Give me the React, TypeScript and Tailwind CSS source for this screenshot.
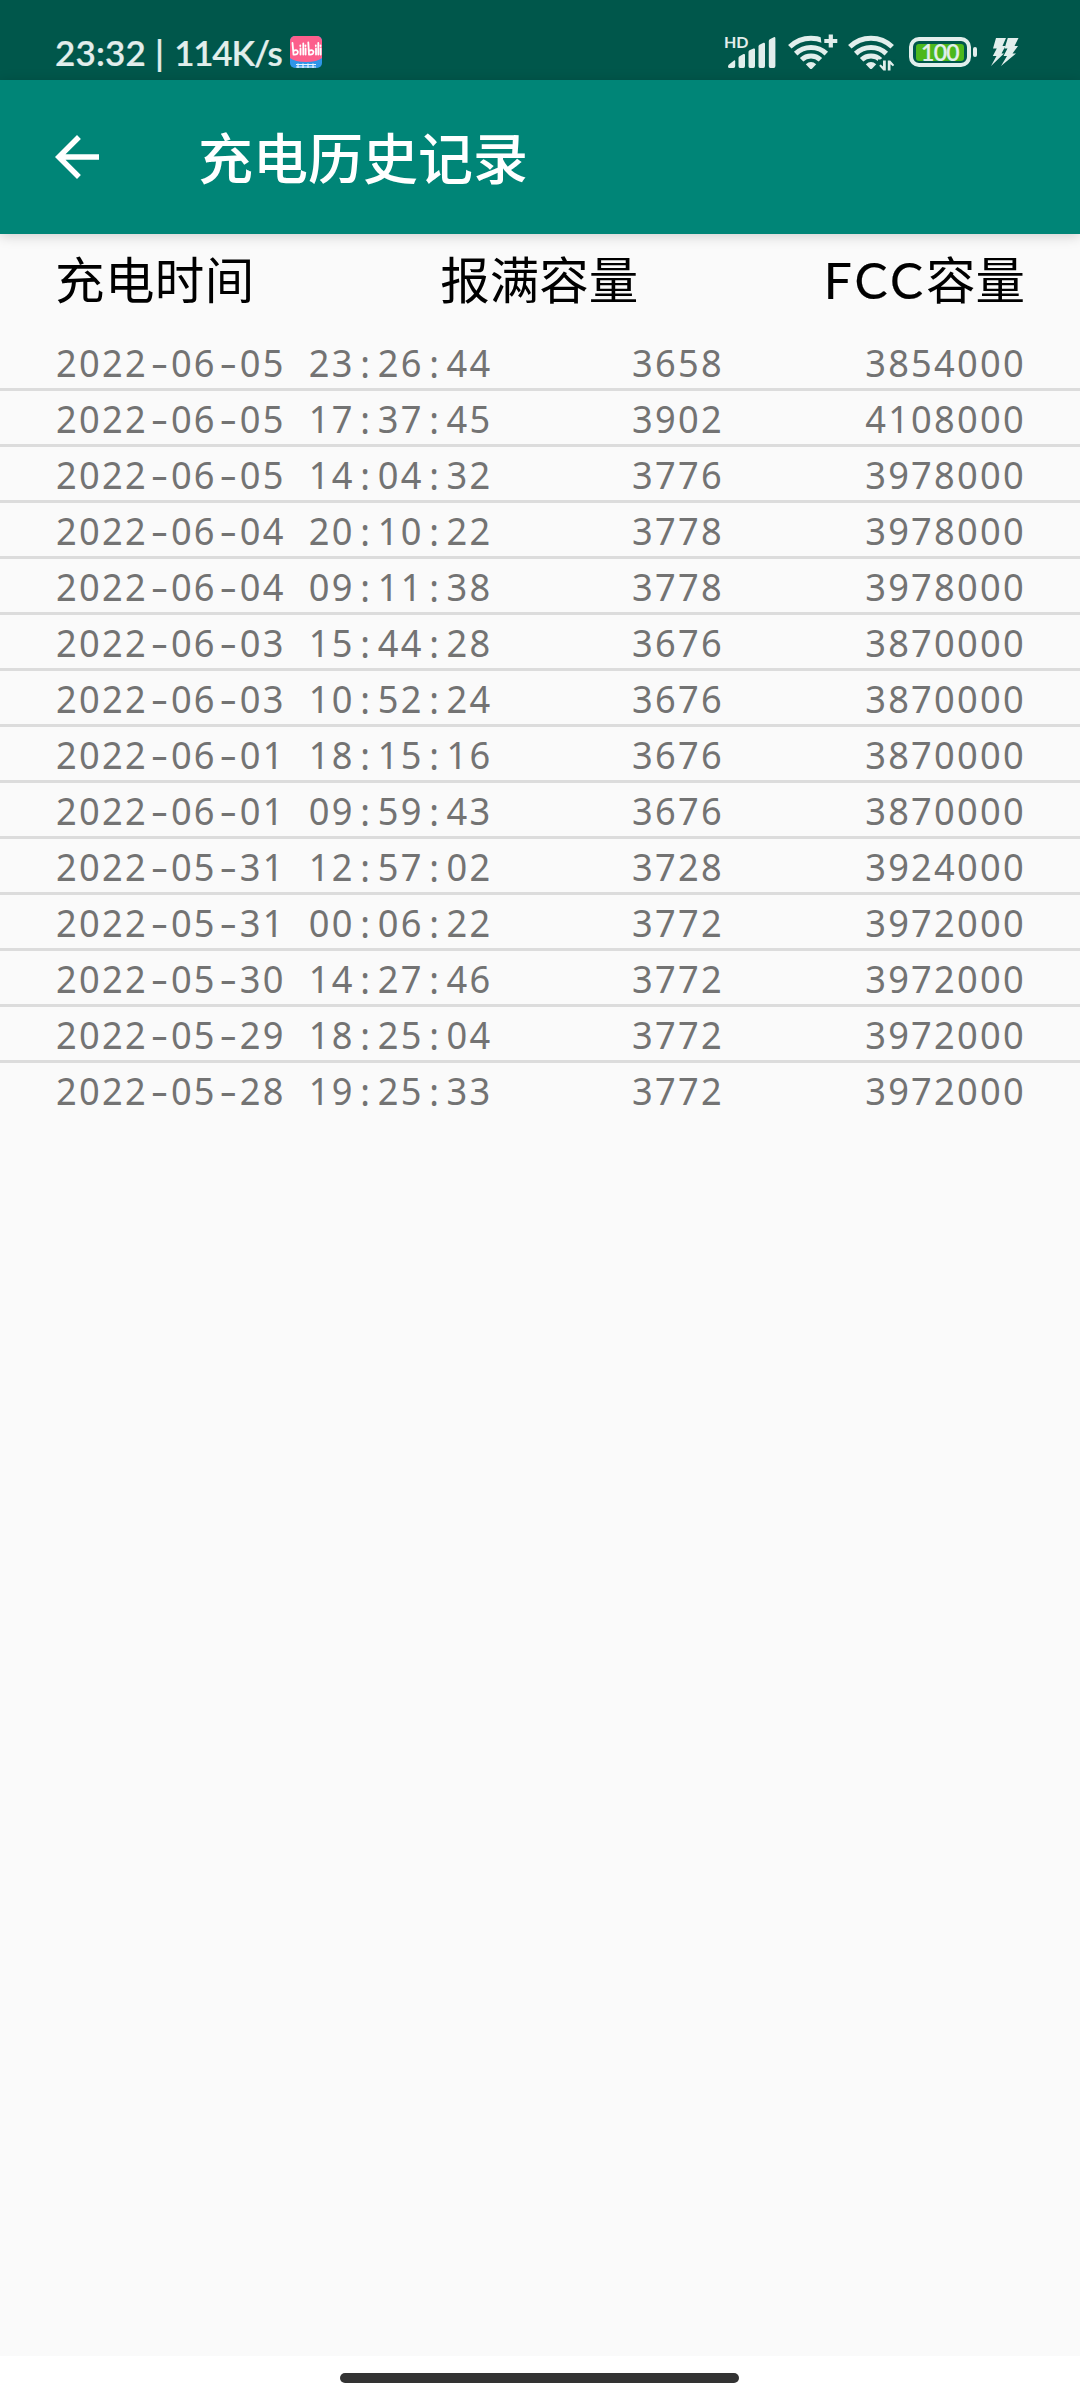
import type { ReactNode } from "react"

interface ChargeRecord {
  time: string
  capacity: string
  fcc: string
}

const records: ChargeRecord[] = [
  { time: "2022-06-05 23:26:44", capacity: "3658", fcc: "3854000" },
  { time: "2022-06-05 17:37:45", capacity: "3902", fcc: "4108000" },
  { time: "2022-06-05 14:04:32", capacity: "3776", fcc: "3978000" },
  { time: "2022-06-04 20:10:22", capacity: "3778", fcc: "3978000" },
  { time: "2022-06-04 09:11:38", capacity: "3778", fcc: "3978000" },
  { time: "2022-06-03 15:44:28", capacity: "3676", fcc: "3870000" },
  { time: "2022-06-03 10:52:24", capacity: "3676", fcc: "3870000" },
  { time: "2022-06-01 18:15:16", capacity: "3676", fcc: "3870000" },
  { time: "2022-06-01 09:59:43", capacity: "3676", fcc: "3870000" },
  { time: "2022-05-31 12:57:02", capacity: "3728", fcc: "3924000" },
  { time: "2022-05-31 00:06:22", capacity: "3772", fcc: "3972000" },
  { time: "2022-05-30 14:27:46", capacity: "3772", fcc: "3972000" },
  { time: "2022-05-29 18:25:04", capacity: "3772", fcc: "3972000" },
  { time: "2022-05-28 19:25:33", capacity: "3772", fcc: "3972000" },
]

function MonoTime({ value }: { value: string }) {
  const parts: ReactNode[] = value.split(/([-:])/).map((part, i) => {
    if (part === "-") {
      return (
        <span key={i} className="inline-block w-[24.44px] scale-x-[1.5] text-center tracking-normal">
          {part}
        </span>
      )
    }
    if (part === ":") {
      return (
        <span key={i} className="relative top-px -left-px inline-block w-[24.44px] text-center tracking-normal">
          {part}
        </span>
      )
    }
    return part
  })
  return <span className="[word-spacing:12px]">{parts}</span>
}

function WifiArcs() {
  return (
    <>
      <g fill="none" stroke="currentColor" strokeWidth="5">
        <path d="M1.8 11.8 A30.5 30.5 0 0 1 44.2 11.8" />
        <path d="M7.7 18.6 A22 22 0 0 1 38.3 18.6" />
        <path d="M13.6 24.8 A13.6 13.6 0 0 1 32.4 24.8" />
      </g>
      <path d="M17.8 29.2 Q23 24.8 28.2 29.2 L24.2 33.6 Q23 34.6 21.8 33.6 Z" fill="currentColor" />
    </>
  )
}

function AppBadge() {
  return (
    <svg className="h-8 w-8" viewBox="0 0 32 32">
      <defs>
        <clipPath id="badge">
          <rect width="32" height="32" rx="5" />
        </clipPath>
      </defs>
      <g clipPath="url(#badge)">
        <rect width="32" height="32" fill="#2f95e8" />
        <path d="M0 0H32V22Q27 26 16 26Q5 26 0 22Z" fill="#fc5f8c" />
        <g fill="none" stroke="#fff" strokeWidth="1.8" strokeLinecap="round">
          <path d="M2.5 7L3.5 18.5Q8.5 19 7.8 15.5Q6.5 13 3.5 15" />
          <path d="M10.5 12.5V18.5M10.3 9.5V10M13.3 7.5V18.5M15.6 12.5V18.5M15.5 9.5V10" />
          <path d="M18.3 6.5L19 18.5Q24 19 23.4 15.5Q22 13 19 15" />
          <path d="M26 12.5V18.5M25.8 9.5V10M28.3 7V18.5M30.6 12.5V18.5M30.5 9.5V10" />
        </g>
        <path d="M6 28.5H26M6 31H26M8 27.5V32M13 27.5V32M18 27.5V32M23 27.5V32" stroke="#e6f4ff" strokeWidth="1.2" />
      </g>
    </svg>
  )
}

function StatusBar() {
  return (
    <div className="flex h-[80px] shrink-0 items-start justify-between bg-[#00574b] pr-[61px] pl-[55px] pt-[32px] text-[#e2eeec]">
      <div className="flex h-[40px] items-center">
        <div className="flex w-[235px] items-center whitespace-pre font-[Lato] text-[35px] leading-[38px] font-semibold [-webkit-text-stroke:0.2px]">
          <span className="tracking-[0.2px]">23:32 |</span>
          <span className="ml-[10px] tracking-[-1.2px]">114K/s</span>
        </div>
        <AppBadge />
      </div>
      <div className="flex h-[40px] items-start">
        <div className="relative h-[40px] w-[52px]">
          <span className="absolute top-[2px] -left-[2px] font-[Lato] text-[16px] leading-[16px] font-bold">HD</span>
          <svg className="h-[40px] w-[52px]" viewBox="0 0 52 40" fill="currentColor">
            <path d="M2 34.5Q2 33.5 3 32.5L8 28.4Q9.2 28 9.2 29.5V34Q9.2 36 7.5 36H3.5Q2 36 2 34.5Z" />
            <path d="M12.5 26Q12.5 25 13.5 24.3L17.5 22Q19 21.5 19 23V34Q19 36 17.3 36H14Q12.5 36 12.5 34Z" />
            <path d="M22.5 20Q22.5 19 23.5 18.3L27.5 16.5Q29 16 29 17.5V34Q29 36 27.3 36H24Q22.5 36 22.5 34Z" />
            <path d="M32.5 14.5Q32.5 13.5 33.5 12.8L37.5 10.8Q39 10.3 39 12V34Q39 36 37.3 36H34Q32.5 36 32.5 34Z" />
            <path d="M42.8 9Q42.8 8 43.8 7.3L47.8 5.2Q49.4 4.7 49.4 6.5V34Q49.4 36 47.7 36H44.3Q42.8 36 42.8 34Z" />
          </svg>
        </div>
        <svg className="ml-[10px] h-[40px] w-[52px]" viewBox="0 -3 52 40">
          <WifiArcs />
          <path d="M32 -3H52V14H41L33.5 9Z" fill="#00574b" />
          <path d="M42.8 -0.5V12.5M36.3 6H49.3" stroke="currentColor" strokeWidth="4.2" />
        </svg>
        <svg className="ml-[8px] h-[40px] w-[48px]" viewBox="0 -3 48 40">
          <WifiArcs />
          <path d="M30 24.5H48V37H29Z" fill="#00574b" />
          <path d="M37.8 25.5V35.5H35.4L31.2 30.8L32.6 29.6L35 31.5V25.5Z" fill="currentColor" />
          <path d="M39.8 35.5V25.5H42.2L46.2 30L44.8 31.3L42.5 29.3V35.5Z" fill="currentColor" />
        </svg>
        <div className="mt-[5px] ml-[13px] flex items-center">
          <div className="flex h-[30px] w-[62px] items-center justify-center rounded-[10px] border-[4px] border-current">
            <div className="flex h-[17px] w-[48px] items-center justify-center rounded-[3px] bg-[#4cb81c] font-[Lato] text-[23px] leading-[17px] font-semibold tracking-[-0.7px] [-webkit-text-stroke:0.2px]">
              100
            </div>
          </div>
          <div className="ml-[2px] h-[10px] w-[4px] rounded-full bg-current" />
        </div>
        <svg className="mt-[6px] ml-[14px] h-[28px] w-[28px]" viewBox="0 0 28 28" fill="currentColor">
          <path d="M5 0H15L11.5 8H14.5L10.5 15.5H13L0 28L5.5 18H1.8L5.8 10.5H2Z" />
          <path d="M16.8 0H27.5L23.5 8H27L21.5 15.5H25L10 28L16 18H12.5L16.5 10.5H13.5Z" />
        </svg>
      </div>
    </div>
  )
}

export default function App() {
  return (
    <div className="flex h-[2400px] w-[1080px] flex-col overflow-hidden bg-[#fafafa]">
      <StatusBar />

      {/* App bar */}
      <header className="z-10 flex h-[154px] shrink-0 items-center bg-[#008577] pl-[44px] text-white shadow-[0_2px_12px_rgba(0,0,0,0.18)]">
        <svg className="h-[66px] w-[66px]" viewBox="0 0 24 24" fill="currentColor">
          <path d="M20 11H7.83l5.59-5.59L12 4l-8 8 8 8 1.41-1.41L7.83 13H20v-2z" />
        </svg>
        <h1 className="mb-[5px] ml-[88px] font-['Noto_Sans_CJK_SC',sans-serif] text-[55px] leading-[66px] font-medium">充电历史记录</h1>
      </header>

      {/* Column titles */}
      <div className="flex h-[101px] shrink-0 justify-between px-[55px] pt-[12px] font-[Lato,'Noto_Sans_CJK_SC',sans-serif] text-[49.5px] leading-[68px] text-black">
        <span className="tracking-[0.4px]">充电时间</span>
        <span>报满容量</span>
        <span>
          <span className="tracking-[3px] [-webkit-text-stroke:0.2px]">FCC</span>容量
        </span>
      </div>

      {/* Records */}
      <main className="flex-1 font-['Noto_Sans',sans-serif] text-[38.5px] leading-[53px] tracking-[2.42px] text-[#737373]">
        <ul className="divide-y-[3px] divide-[#dcdcdc]">
          {records.map((record) => (
            <li key={record.time} className="flex h-[56px] pt-px pr-[54px] pl-[56px]">
              <div className="w-[440px] origin-left scale-x-[0.94] whitespace-nowrap">
                <MonoTime value={record.time} />
              </div>
              <div className="w-[228px] origin-right scale-x-[0.94] text-right">{record.capacity}</div>
              <div className="flex-1 origin-right scale-x-[0.94] text-right">{record.fcc}</div>
            </li>
          ))}
        </ul>
      </main>

      {/* Gesture bar */}
      <footer className="flex h-[44px] shrink-0 justify-center bg-white pt-[17px] pr-[2px]">
        <div className="h-[10px] w-[399px] rounded-full bg-[#333333]" />
      </footer>
    </div>
  )
}
